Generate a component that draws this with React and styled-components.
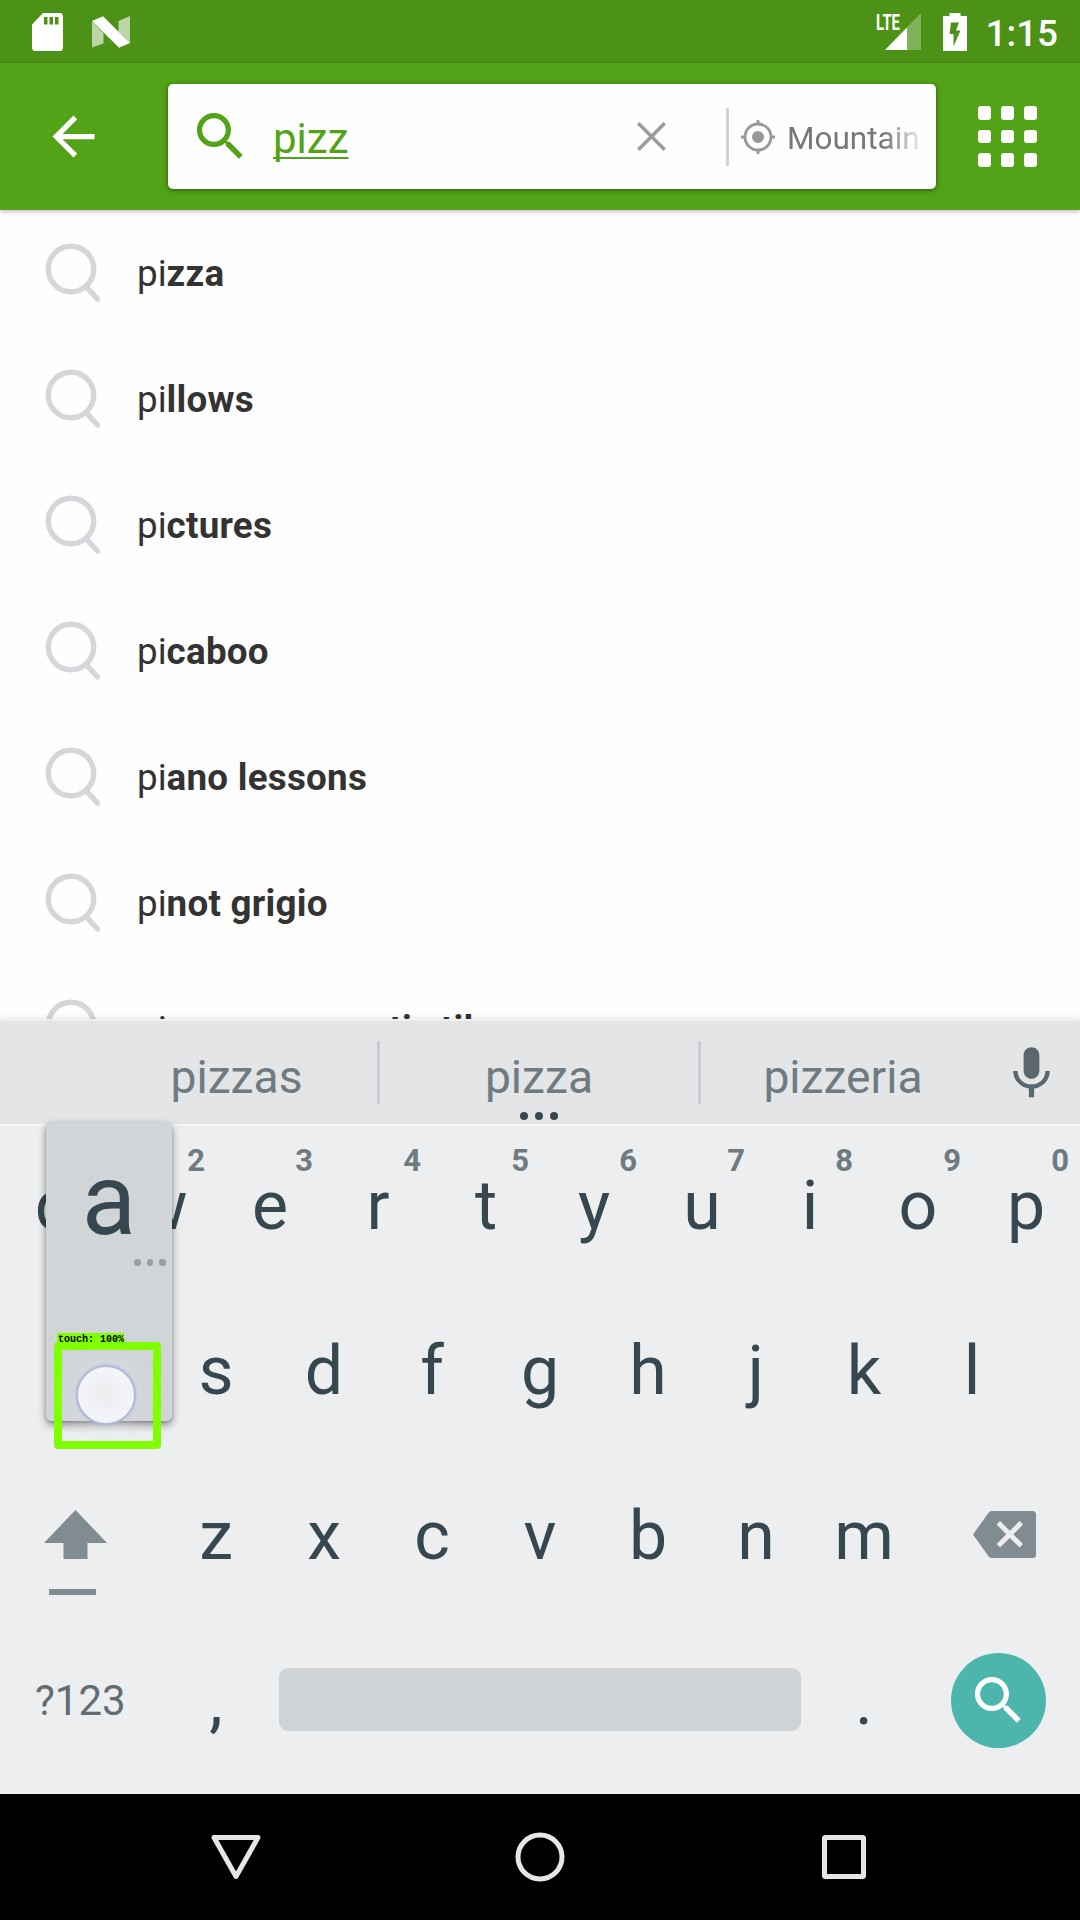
import React from "react";
import styled, { createGlobalStyle } from "styled-components";

const GlobalStyle = createGlobalStyle`
  * { box-sizing: border-box; }
  html, body { margin: 0; padding: 0; }
  body {
    width: 1080px;
    font-family: Roboto, "Liberation Sans", sans-serif;
    background: #fff;
  }
  svg { display: block; flex: none; }
`;

const Screen = styled.div`
  width: 1080px;
  height: 1920px;
  display: flex;
  flex-direction: column;
  overflow: hidden;
  background: #fefefe;
`;

const StatusBar = styled.div`
  height: 63px;
  flex: none;
  display: flex;
  align-items: center;
  justify-content: space-between;
  padding: 0 22px 0 32px;
  background: #4b9217;
`;

const StatusGroup = styled.div`
  display: flex;
  align-items: center;
  gap: ${(p) => p.$gap}px;
`;

const Clock = styled.span`
  margin-left: -2px;
  font-size: 36.75px;
  line-height: 43px;
  font-weight: 500;
  color: #fff;
  padding-top: 4px;
`;

const Toolbar = styled.header`
  height: 147px;
  flex: none;
  display: flex;
  align-items: center;
  background: #53a318;
  box-shadow: 0 1px 5px rgba(60, 10, 10, 0.35);
  z-index: 1;
`;

const BackButton = styled.div`
  width: 168px;
  padding-left: 42px;
`;

const SearchBox = styled.div`
  width: 768px;
  height: 105px;
  display: flex;
  align-items: center;
  background: #fefefe;
  border-radius: 5px;
  box-shadow: 0 1px 5px rgba(0, 0, 0, 0.5);
  padding: 0 14px 0 21px;
`;

const Query = styled.span`
  width: 385px;
  padding: 5px 0 0 21px;
  font-size: 42px;
  line-height: 50px;
  color: #53a318;

  u {
    text-decoration-thickness: 2px;
    text-underline-offset: 4px;
    text-decoration-skip-ink: none;
  }
`;

const BoxDivider = styled.div`
  width: 3px;
  height: 58px;
  margin: 0 12px 0 60px;
  background: #cdd2d8;
`;

const Place = styled.span`
  flex: 1;
  margin-left: 12px;
  padding-top: 3px;
  overflow: hidden;
  white-space: nowrap;
  font-size: 31.5px;
  line-height: 37px;
  color: #76787a;
  mask-image: linear-gradient(to right, #000 72%, transparent 103%);
`;

const AppGrid = styled.div`
  display: grid;
  grid-template-columns: repeat(3, 13px);
  grid-auto-rows: 13.5px;
  gap: 10px;
  margin-left: 42px;
`;

const GridDot = styled.i`
  background: #fff;
  border-radius: 3px;
`;

const Suggestions = styled.ul`
  height: 809px;
  flex: none;
  margin: 0;
  padding: 0;
  list-style: none;
  overflow: hidden;
`;

const Suggestion = styled.li`
  height: 126px;
  display: flex;
  align-items: center;
  gap: 37px;
  padding-left: 45px;
  font-size: 36.75px;
  line-height: 43px;
  color: #333;
  white-space: pre;

  b {
    font-weight: 700;
    letter-spacing: 0.25px;
  }
`;

const Keyboard = styled.section`
  position: relative;
  height: 775px;
  flex: none;
  border-top: 2px solid #efefef;
  background: #eceeef;
  box-shadow: 0 0 7px rgba(0, 0, 0, 0.12);
`;

const WordStrip = styled.div`
  height: 103px;
  display: flex;
  align-items: center;
  padding: 0 17px 0 96px;
  background: #e3e5e6;
  box-shadow: 0 2px 0 #f4f5f6;
`;

const Word = styled.div`
  position: relative;
  width: ${(p) => p.$width}px;
  padding-top: 9px;
  text-align: center;
  font-size: 46.2px;
  line-height: 55px;
  color: #6f7b80;
`;

const WordDivider = styled.div`
  width: 3px;
  height: 63px;
  background: #c9cdd1;
`;

const MoreWords = styled.div`
  position: absolute;
  left: 0;
  right: 0;
  top: 71px;
  display: flex;
  justify-content: center;
  gap: 7px;

  i {
    width: 8px;
    height: 8px;
    border-radius: 50%;
    background: #37474f;
  }
`;

const Mic = styled.div`
  margin-left: auto;
  padding-top: 2px;
`;

const KeyRow = styled.div`
  height: 165px;
  display: flex;
  align-items: center;
  justify-content: center;
`;

const Key = styled.div`
  position: relative;
  width: 108px;
  height: 165px;
  text-align: center;
  font-size: 68px;
  line-height: 165px;
  color: #37474f;
`;

const Hint = styled.span`
  position: absolute;
  right: 11px;
  top: 19px;
  font-size: 31px;
  line-height: 36px;
  font-weight: 700;
  color: #6f7b80;
`;

const SideKey = styled.div`
  width: 162px;
  height: 165px;
  display: flex;
  flex-direction: column;
  align-items: ${(p) => p.$align || "flex-start"};
  padding: ${(p) => p.$pad};
`;

const ShiftBar = styled.div`
  width: 47px;
  height: 6px;
  margin: 30px 0 0 5px;
  background: #808c91;
`;

const Symbols = styled.div`
  width: 162px;
  padding: 0 0 1px 35px;
  font-size: 42px;
  line-height: 50px;
  color: #616d72;
`;

const SpaceBar = styled.div`
  width: 522px;
  height: 63px;
  margin: 0 9px 4px;
  border-radius: 9px;
  background: #d0d4d7;
`;

const SearchKey = styled.div`
  width: 95px;
  height: 95px;
  margin: 0 34px 3px 33px;
  display: flex;
  align-items: center;
  justify-content: center;
  border-radius: 50%;
  background: #4db6ac;
`;

const KeyPopup = styled.div`
  position: absolute;
  left: 46px;
  top: 101px;
  width: 126px;
  height: 299px;
  border-radius: 5px;
  background: #d1d5d7;
  box-shadow: 0 4px 8px rgba(0, 0, 0, 0.4), 0 1px 3px rgba(0, 0, 0, 0.2);
  text-align: center;
  font-size: 100px;
  line-height: 116px;
  padding-top: 20px;
  color: #37474f;
`;

const PopupDots = styled.div`
  display: flex;
  justify-content: flex-end;
  gap: 6px;
  padding-right: 6.5px;
  margin-top: 1px;

  i {
    width: 6.5px;
    height: 6.5px;
    border-radius: 50%;
    background: #989ea1;
  }
`;

const TouchPoint = styled.div`
  position: absolute;
  left: 76px;
  top: 344px;
  width: 60px;
  height: 60px;
  border-radius: 50%;
  border: 2px solid #b4b8da;
  background: radial-gradient(circle, #ececee 0%, #f2f3f7 55%, #f6f6fb 100%);
  box-shadow: 0 0 3px rgba(160, 165, 215, 0.7), 0 0 22px 4px rgba(235, 236, 240, 0.35);
`;

const TouchBox = styled.div`
  position: absolute;
  left: 54px;
  top: 321px;
  width: 107px;
  height: 107px;
  border: 8px solid #7fff00;
  border-radius: 4px;
`;

const TouchLabel = styled.div`
  position: absolute;
  left: 57px;
  top: 312px;
  width: 67px;
  height: 12px;
  padding-left: 1px;
  background: #7fff00;
  color: #000;
  font: 700 10px/14px "Liberation Mono", monospace;
  white-space: pre;
`;

const NavBar = styled.nav`
  height: 126px;
  flex: none;
  display: flex;
  align-items: center;
  justify-content: center;
  gap: 240px;
  background: #000;
`;

const SEARCH_PATH =
  "M15.5 14h-.79l-.28-.27C15.41 12.59 16 11.11 16 9.5 16 5.91 13.09 3 9.5 3S3 5.91 3 9.5 5.91 16 9.5 16c1.61 0 3.09-.59 4.23-1.57l.27.28v.79l5 4.99L20.49 19l-4.99-5zm-6 0C7.01 14 5 11.99 5 9.5S7.01 5 9.5 5 14 7.01 14 9.5 11.99 14 9.5 14z";

const Glyph = ({ d, color }) => (
  <svg width="63" height="63" viewBox="0 0 24 24" fill={color}>
    <path d={d} />
  </svg>
);

const SdCard = () => (
  <svg width="31" height="38" viewBox="0 0 31 38">
    <path
      fill="#fff"
      fillRule="evenodd"
      d="M11 0H27.500a3.500 3.500 0 0 1 3.500 3.500V34.500a3.500 3.500 0 0 1-3.500 3.500H3.500A3.500 3.500 0 0 1 0 34.500V11.500ZM12 4v7.500h3.500V4ZM17.500 4v7.500H21V4ZM23 4v7.500h3.500V4Z"
    />
  </svg>
);

const NougatMark = () => (
  <svg width="38" height="32" viewBox="0 0 38 32">
    <path fill="#fff" opacity=".62" d="M0 5.500 11.500 17V27.500L0 31.500ZM38 0 26.500 5v10.500L38 27Z" />
    <path fill="#fff" d="M0 5 11 0.200 38 27 27 31.800Z" />
  </svg>
);

const LteSignal = () => (
  <svg width="46" height="38" viewBox="0 0 46 38">
    <path fill="#fff" opacity=".3" d="M45 0V37H9Z" />
    <path fill="#fff" d="M31 14.500V37H9Z" />
    <text
      x="0"
      y="17.200"
      fill="#fff"
      fontSize="22.500"
      fontWeight="700"
      fontFamily="Roboto, sans-serif"
      textLength="24"
      lengthAdjust="spacingAndGlyphs"
    >
      LTE
    </text>
  </svg>
);

const Battery = () => (
  <svg width="24" height="38" viewBox="0 0 24 38">
    <path
      fill="#fff"
      fillRule="evenodd"
      d="M6.500 0h11v3H24V38H0V3h6.500ZM8 9.500 6.500 21h4V33.500L17.500 17.500H13L16 9.500Z"
    />
  </svg>
);

const RowSearch = () => (
  <svg width="55" height="60" viewBox="0 0 55 60" fill="none" stroke="#d4d6d9" strokeWidth="5.400">
    <circle cx="26" cy="26" r="22.700" />
    <path d="M41 43.500 52.500 56" strokeLinecap="round" />
  </svg>
);

const CloseMark = () => (
  <svg width="29" height="29" viewBox="0 0 29 29" stroke="#999b9d" strokeWidth="3.600">
    <path d="M1.300 1.300 27.700 27.700M27.700 1.300 1.300 27.700" />
  </svg>
);

const LocateMark = () => (
  <svg width="34" height="34" viewBox="0 0 34 34" fill="none" stroke="#96989b" strokeWidth="2.800">
    <circle cx="17" cy="17" r="13" />
    <circle cx="17" cy="17" r="6" fill="#96989b" stroke="none" />
    <path d="M17 0v4.500M17 29.500V34M0 17h4.500M29.500 17H34" />
  </svg>
);

const ShiftArrow = () => (
  <svg width="63" height="49" viewBox="0 0 63 49">
    <path fill="#808c91" d="M31.500 0 63 33H43.500V49H19.500V33H0Z" />
  </svg>
);

const Backspace = () => (
  <svg width="63" height="47" viewBox="0 0 63 47">
    <path fill="#808c91" d="M18.500 0H59.500a3.500 3.500 0 0 1 3.500 3.500V43.500a3.500 3.500 0 0 1-3.500 3.500H18.500Q16.500 47 15 44.500L0 23.500 15 2.500Q16.500 0 18.500 0Z" />
    <path stroke="#eceeef" strokeWidth="5" d="M25.300 11.800 48.300 34.800M48.300 11.800 25.300 34.800" />
  </svg>
);

const NavIcon = ({ children }) => (
  <svg width="64" height="64" viewBox="0 0 64 64" fill="none" stroke="#e6e6e6" strokeWidth="5" strokeLinejoin="round">
    {children}
  </svg>
);

const SUGGESTIONS = ["zza", "llows", "ctures", "caboo", "ano lessons", "not grigio", "eces pneumatic tile"];
const TOP_ROW = ["q", "w", "e", "r", "t", "y", "u", "i", "o", "p"];
const HOME_ROW = ["a", "s", "d", "f", "g", "h", "j", "k", "l"];
const BOTTOM_ROW = ["z", "x", "c", "v", "b", "n", "m"];

export default function App() {
  return (
    <Screen>
      <GlobalStyle />
      <StatusBar>
        <StatusGroup $gap={29}>
          <SdCard />
          <NougatMark />
        </StatusGroup>
        <StatusGroup $gap={21}>
          <LteSignal />
          <Battery />
          <Clock>1:15</Clock>
        </StatusGroup>
      </StatusBar>

      <Toolbar>
        <BackButton>
          <Glyph color="#fff" d="M20 11H7.830l5.590-5.590L12 4l-8 8 8 8 1.410-1.410L7.830 13H20v-2z" />
        </BackButton>
        <SearchBox>
          <Glyph color="#53a318" d={SEARCH_PATH} />
          <Query><u>pizz</u></Query>
          <CloseMark />
          <BoxDivider />
          <LocateMark />
          <Place>Mountain</Place>
        </SearchBox>
        <AppGrid>
          {Array.from({ length: 9 }, (_, i) => <GridDot key={i} />)}
        </AppGrid>
      </Toolbar>

      <Suggestions>
        {SUGGESTIONS.map((rest) => (
          <Suggestion key={rest}>
            <RowSearch />
            <span>pi<b>{rest}</b></span>
          </Suggestion>
        ))}
      </Suggestions>

      <Keyboard>
        <WordStrip>
          <Word $width={281}>pizzas</Word>
          <WordDivider />
          <Word $width={318}>
            pizza
            <MoreWords><i /><i /><i /></MoreWords>
          </Word>
          <WordDivider />
          <Word $width={284}>pizzeria</Word>
          <Mic>
            <Glyph
              color="#5a676e"
              d="M12 14c1.660 0 2.990-1.340 2.990-3L15 5c0-1.660-1.340-3-3-3S9 3.340 9 5v6c0 1.660 1.340 3 3 3zm5.300-3c0 3-2.540 5.100-5.300 5.100S6.700 14 6.700 11H5c0 3.410 2.720 6.230 6 6.720V21h2v-3.280c3.280-.48 6-3.300 6-6.720h-1.700z"
            />
          </Mic>
        </WordStrip>

        <KeyRow>
          {TOP_ROW.map((k, i) => (
            <Key key={k}>{k}<Hint>{(i + 1) % 10}</Hint></Key>
          ))}
        </KeyRow>
        <KeyRow>
          {HOME_ROW.map((k) => <Key key={k}>{k}</Key>)}
        </KeyRow>
        <KeyRow>
          <SideKey $pad="56px 0 0 44px">
            <ShiftArrow />
            <ShiftBar />
          </SideKey>
          {BOTTOM_ROW.map((k) => <Key key={k}>{k}</Key>)}
          <SideKey $align="flex-end" $pad="57px 44px 0 0">
            <Backspace />
          </SideKey>
        </KeyRow>
        <KeyRow>
          <Symbols>?123</Symbols>
          <Key>,</Key>
          <SpaceBar />
          <Key>.</Key>
          <SearchKey><Glyph color="#fff" d={SEARCH_PATH} /></SearchKey>
        </KeyRow>

        <KeyPopup>
          a
          <PopupDots><i /><i /><i /></PopupDots>
        </KeyPopup>
        <TouchBox />
        <TouchPoint />
        <TouchLabel>touch: 100%</TouchLabel>
      </Keyboard>

      <NavBar>
        <NavIcon><path d="M10 13H54L32 52Z" transform="translate(0 -.5)" /></NavIcon>
        <NavIcon><circle cx="32" cy="32" r="22" /></NavIcon>
        <NavIcon><rect x="12.500" y="12.500" width="39" height="39" rx="1" /></NavIcon>
      </NavBar>
    </Screen>
  );
}
